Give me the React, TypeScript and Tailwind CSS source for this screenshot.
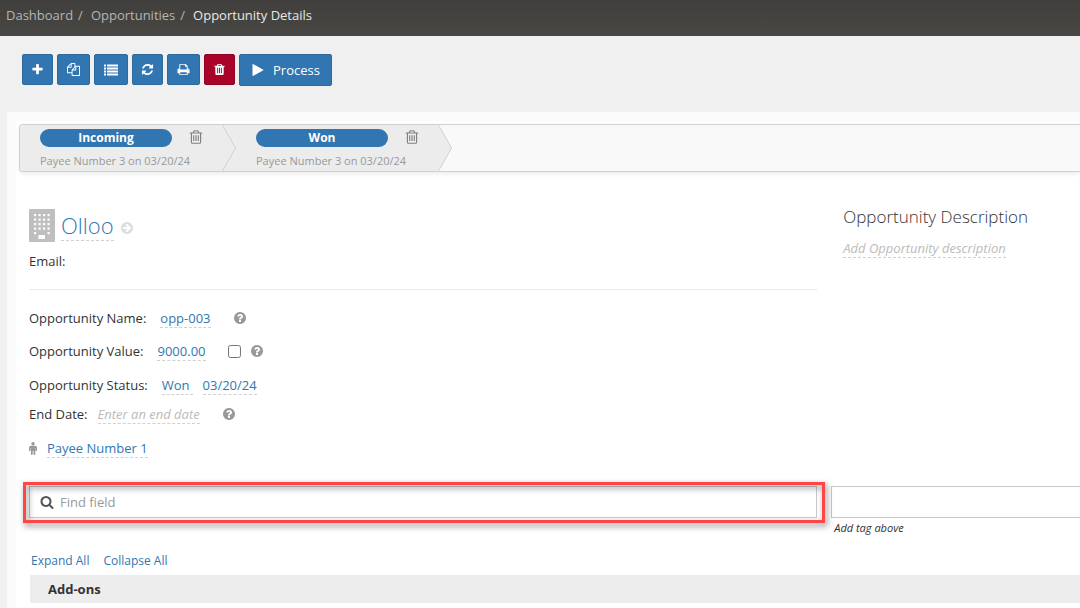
import type { ReactNode } from "react";

const circle =
  "M1664 896q0 209-103 385.5t-279.5 279.5-385.5 103-385.5-103-279.5-279.5-103-385.5 103-385.5 279.5-279.5 385.5-103 385.5 103 279.5 279.5 103 385.5z";
const canBody =
  "h448l-48-117q-7-9-17-11h-317q-10 2-17 11zm928 32v64q0 14-9 23t-23 9h-96v948q0 83-47 143.5t-113 60.5h-832q-66 0-113-58.5t-47-141.5v-952h-96q-14 0-23-9t-9-23v-64q0-14 9-23t23-9h309l70-167q15-37 54-63t79-26h320q40 0 79 26t54 63l70 167h309q14 0 23 9t9 23z";

const paths = {
  plus: "M1600 736v192q0 40-28 68t-68 28h-416v416q0 40-28 68t-68 28h-192q-40 0-68-28t-28-68v-416h-416q-40 0-68-28t-28-68v-192q0-40 28-68t68-28h416v-416q0-40 28-68t68-28h192q40 0 68 28t28 68v416h416q40 0 68 28t28 68z",
  copy: "M1696 384q40 0 68 28t28 68v1216q0 40-28 68t-68 28h-960q-40 0-68-28t-28-68v-288h-544q-40 0-68-28t-28-68v-672q0-40 20-88t48-76l408-408q28-28 76-48t88-20h416q40 0 68 28t28 68v328q68-40 128-40h416zm-544 213l-299 299h299v-299zm-640-384l-299 299h299v-299zm196 647l316-316v-416h-384v416q0 40-28 68t-68 28h-416v640h512v-256q0-40 20-88t48-76zm956 804v-1152h-384v416q0 40-28 68t-68 28h-416v640h896z",
  list: "M0 192h256v256h-256zM384 192h1408v256h-1408zM0 576h256v256h-256zM384 576h1408v256h-1408zM0 960h256v256h-256zM384 960h1408v256h-1408zM0 1344h256v256h-256zM384 1344h1408v256h-1408z",
  refresh:
    "M1639 1056q0 5-1 7-64 268-268 434.5t-478 166.5q-146 0-282.5-55t-243.5-157l-129 129q-19 19-45 19t-45-19-19-45v-448q0-26 19-45t45-19h448q26 0 45 19t19 45-19 45l-137 137q71 66 161 102t187 36q134 0 250-65t186-179q11-17 53-117 8-23 30-23h192q13 0 22.5 9.5t9.5 22.5zm25-800v448q0 26-19 45t-45 19h-448q-26 0-45-19t-19-45 19-45l138-138q-148-137-349-137-134 0-250 65t-186 179q-11 17-53 117-8 23-30 23h-199q-13 0-22.5-9.5t-9.5-22.5v-7q65-268 270-434.5t480-166.5q146 0 284 55.5t245 156.5l130-129q19-19 45-19t45 19 19 45z",
  print:
    "M448 1536h896v-256h-896v256zm0-640h896v-384h-160q-40 0-68-28t-28-68v-160h-640v640zm1152 64q0-26-19-45t-45-19-45 19-19 45 19 45 45 19 45-19 19-45zm128 0v416q0 13-9.5 22.5t-22.5 9.5h-224v160q0 40-28 68t-68 28h-960q-40 0-68-28t-28-68v-160h-224q-13 0-22.5-9.5t-9.5-22.5v-416q0-79 56.5-135.5t135.5-56.5h64v-544q0-40 28-68t68-28h672q40 0 88 20t76 48l152 152q28 28 48 76t20 88v256h64q79 0 135.5 56.5t56.5 135.5z",
  trash:
    "M704 1376v-704q0-14-9-23t-23-9h-64q-14 0-23 9t-9 23v704q0 14 9 23t23 9h64q14 0 23-9t9-23zm256 0v-704q0-14-9-23t-23-9h-64q-14 0-23 9t-9 23v704q0 14 9 23t23 9h64q14 0 23-9t9-23zm256 0v-704q0-14-9-23t-23-9h-64q-14 0-23 9t-9 23v704q0 14 9 23t23 9h64q14 0 23-9t9-23zm-544-992" +
    canBody,
  trashOutline:
    "M704 736v576q0 14-9 23t-23 9h-64q-14 0-23-9t-9-23v-576q0-14 9-23t23-9h64q14 0 23 9t9 23zm256 0v576q0 14-9 23t-23 9h-64q-14 0-23-9t-9-23v-576q0-14 9-23t23-9h64q14 0 23 9t9 23zm256 0v576q0 14-9 23t-23 9h-64q-14 0-23-9t-9-23v-576q0-14 9-23t23-9h64q14 0 23 9t9 23zm128 724v-948h-896v948q0 22 7 40.5t14.5 27 10.5 8.5h832q3 0 10.5-8.5t14.5-27 7-40.5zm-672-1076" +
    canBody,
  play: "M1576 927l-1328 738q-23 13-39.5 3t-16.5-36v-1472q0-26 16.5-36t39.5 3l1328 738q23 13 23 31t-23 31z",
  search:
    "M1216 832q0-185-131.5-316.5t-316.5-131.5-316.5 131.5-131.5 316.5 131.5 316.5 316.5 131.5 316.5-131.5 131.5-316.5zm512 832q0 52-38 90t-90 38q-54 0-90-38l-343-342q-179 124-399 124-143 0-273.5-55.5t-225-150-150-225-55.5-273.5 55.5-273.5 150-225 225-150 273.5-55.5 273.5 55.5 225 150 150 225 55.5 273.5q0 220-124 399l343 343q37 37 37 90z",
  question:
    "M1024 1376v-192q0-14-9-23t-23-9h-192q-14 0-23 9t-9 23v192q0 14 9 23t23 9h192q14 0 23-9t9-23zm256-672q0-88-55.5-163t-138.5-116-170-41q-243 0-371 213-15 24 8 42l132 100q7 6 19 6 16 0 25-12 53-68 86-92 34-24 86-24 48 0 85.5 26t37.5 59q0 38-20 61t-68 45q-63 28-115.5 86.5t-52.5 125.5v36q0 14 9 23t23 9h192q14 0 23-9t9-23q0-19 21.5-49.5t54.5-49.5q32-18 49-28.5t46-35 44.5-48 28-60.5 12.5-81z" +
    circle,
  arrowRight:
    "M1413 896q0-27-18-45l-453-453q-18-18-45-18t-45 18l-91 91q-18 18-18 45t18 45l189 189h-502q-26 0-45 19t-19 45v128q0 26 19 45t45 19h502l-189 189q-19 19-19 45t19 45l91 91q18 18 45 18t45-18l453-453q18-18 18-45z" +
    circle,
};

function Icon({ name, className }: { name: keyof typeof paths; className: string }) {
  return (
    <svg viewBox="0 0 1792 1792" fill="currentColor" fillRule="evenodd" aria-hidden="true" className={`shrink-0 ${className}`}>
      <path d={paths[name]} />
    </svg>
  );
}

const tools: { label: string; icon: keyof typeof paths; style: string; size: string }[] = [
  { label: "Add", icon: "plus", style: "w-[31px] bg-[#3276b1] border-[#2c699d]", size: "size-[13px]" },
  { label: "Copy", icon: "copy", style: "w-[33px] bg-[#3276b1] border-[#2c699d]", size: "size-[13px]" },
  { label: "List", icon: "list", style: "w-[34px] bg-[#3276b1] border-[#2c699d]", size: "size-[14px]" },
  { label: "Refresh", icon: "refresh", style: "w-[31px] bg-[#3276b1] border-[#2c699d]", size: "size-[13px]" },
  { label: "Print", icon: "print", style: "w-[33px] bg-[#3276b1] border-[#2c699d]", size: "size-[13px]" },
  { label: "Delete", icon: "trash", style: "w-[31px] bg-[#a90329] border-[#900323]", size: "size-[13px]" },
];

function Stage({ name, last }: { name: string; last?: boolean }) {
  return (
    <li className="flex w-[216px] bg-[#ececec]">
      <div className="flex flex-1 flex-col pl-5 pt-1">
        <div className="flex h-[18px] items-center gap-4">
          <span className="w-[132px] shrink-0 rounded-full bg-[#3276b1] text-center text-xs leading-[18px] font-bold text-white">{name}</span>
          <button type="button" aria-label={`Delete ${name}`} className="pb-0.5 text-[#808080]">
            <Icon name="trashOutline" className="size-4" />
          </button>
        </div>
        <p className="mt-1 text-[11px] leading-5 whitespace-nowrap text-[#999]">Payee Number 3 on 03/20/24</p>
      </div>
      <svg viewBox="0 0 14 46" className="h-[46px] w-[14px] shrink-0" aria-hidden="true">
        {last && <path d="M0 0H14V46H0L13.500 23Z" fill="#f9f9f9" />}
        <path d="M0.500 0L13.500 23L0.500 46" fill="none" stroke="#d0d0d0" />
      </svg>
    </li>
  );
}

function Editable({ children, className = "text-[#3276b1]" }: { children: ReactNode; className?: string }) {
  return (
    <a href="#edit" className={`border-b border-dashed border-[#d0d0d0] leading-[18px] ${className}`}>
      {children}
    </a>
  );
}

function Help({ className }: { className: string }) {
  return (
    <button type="button" aria-label="Help" className={`text-[#999] ${className}`}>
      <Icon name="question" className="size-[14px]" />
    </button>
  );
}

function BuildingIcon() {
  return (
    <svg viewBox="0 0 26 33" className="h-[33px] w-[26px]" aria-hidden="true">
      <rect width="26" height="33" rx="1" fill="#bfbfbf" />
      {[5, 9.500, 14, 18.500, 23].map((y, row) =>
        [5, 9.500, 14, 18.500].map((x, col) =>
          row === 4 && (col === 1 || col === 2) ? null : <rect key={`${x}-${y}`} x={x} y={y} width="2.200" height="2.200" fill="#fff" />,
        ),
      )}
      <rect x="9.500" y="26" width="6.500" height="4" fill="#fff" />
    </svg>
  );
}

function PersonIcon() {
  return (
    <svg viewBox="0 0 8 13" fill="#999" className="h-[13px] w-2" aria-hidden="true">
      <circle cx="4" cy="1.7" r="1.7" />
      <path d="M2 3.8h4q2 0 2 2v2.600q0 .7-.7.7t-.7-.7V6h-.3v6q0 .9-.9.9t-.9-.9V9h-.8v3q0 .9-.9.9t-.9-.9V6h-.4v2.400q0 .7-.7.7T0 8.400V5.800q0-2 2-2z" />
    </svg>
  );
}

export default function App() {
  return (
    <div className="min-h-screen overflow-x-hidden bg-[#f0f0f0] font-['Open_Sans',sans-serif] text-[13px] leading-5 text-[#333]">
      <nav aria-label="Breadcrumb" className="h-9 bg-linear-to-b from-[#403f3d] to-[#484743] px-1.5 pt-[5px] text-[#b5b5b5]">
        <ol className="flex">
          <li><a href="#dashboard">Dashboard</a></li>
          <li className="px-1 pl-[5px]" aria-hidden="true">/</li>
          <li className="pl-1"><a href="#opportunities">Opportunities</a></li>
          <li className="px-1 pl-[5px]" aria-hidden="true">/</li>
          <li className="pl-1 text-[#e8e8e8]" aria-current="page">Opportunity Details</li>
        </ol>
      </nav>

      <div className="flex h-[76px] items-start gap-1 px-[22px] pt-[18px] text-white">
        {tools.map((tool) => (
          <button key={tool.label} type="button" aria-label={tool.label} className={`flex h-[31px] items-center justify-center rounded-xs border ${tool.style}`}>
            <Icon name={tool.icon} className={tool.size} />
          </button>
        ))}
        <button type="button" className="flex h-8 items-center gap-2 rounded-xs border border-[#2c699d] bg-[#3276b1] px-[11px]">
          <Icon name="play" className="size-[14px]" />
          Process
        </button>
      </div>

      <div className="ml-[7px] bg-[#fafafa] pt-[9px] pl-[9px]">
        <main className="min-h-[487px] bg-white pt-[3px]">
          <ol className="ml-[3px] flex h-12 overflow-hidden rounded-l-sm border border-r-0 border-[#d0d0d0] bg-[#f9f9f9] shadow-[0_2px_4px_rgba(0,0,0,0.08)]">
            <Stage name="Incoming" />
            <Stage name="Won" last />
          </ol>

          <div className="flex pl-[13px]">
            <section className="w-3/4 shrink-0">
              <div className="border-b border-[#eaeaea] pt-9 pb-[18px]">
                <div className="flex h-[34px] items-center">
                  <BuildingIcon />
                  <h1 className="ml-1.5 flex text-[22px] font-light">
                    <a href="#account" className="border-b border-dashed border-[#d0d0d0] leading-[30px] text-[#3276b1]">Olloo</a>
                  </h1>
                  <a href="#open" aria-label="Open account" className="mt-1.5 ml-1.5 text-[#ddd]">
                    <Icon name="arrowRight" className="size-[14px]" />
                  </a>
                </div>
                <p className="mt-[9px]">Email:</p>
              </div>

              <div className="mt-[18px] flex h-5 items-center">
                <span className="mr-[14px]">Opportunity Name:</span>
                <Editable>opp-003</Editable>
                <Help className="ml-[22px]" />
              </div>
              <div className="mt-[13px] flex h-5 items-center">
                <label htmlFor="value-flag" className="mr-[14px]">Opportunity Value:</label>
                <Editable>9000.00</Editable>
                <input id="value-flag" type="checkbox" className="ml-[22px] size-[13px]" />
                <Help className="ml-[9px]" />
              </div>
              <div className="mt-[14px] flex h-5 items-center">
                <span className="mr-[14px]">Opportunity Status:</span>
                <Editable className="pr-[3px] text-[#3276b1]">Won</Editable>
                <span className="w-[10px]" />
                <Editable>03/20/24</Editable>
              </div>
              <div className="mt-[9px] flex h-5 items-center">
                <span className="mr-[10px]">End Date:</span>
                <Editable className="text-[#bbb] italic">Enter an end date</Editable>
                <Help className="ml-[22px]" />
              </div>
              <div className="mt-[14px] flex h-5 items-center">
                <PersonIcon />
                <span className="w-[10px]" />
                <Editable>Payee Number 1</Editable>
              </div>
            </section>

            <section className="flex-1 pt-[33px] pl-[26px]">
              <h2 className="text-[17px] leading-6 font-light whitespace-nowrap">Opportunity Description</h2>
              <p className="mt-[10px] flex whitespace-nowrap">
                <Editable className="text-[#bbb] italic">Add Opportunity description</Editable>
              </p>
            </section>
          </div>

          <div className="mt-7 flex items-start pl-[13px]">
            <div className="relative w-3/4 shrink-0">
              <div className="flex h-8 items-center gap-1.5 border border-[#c8c8c8] px-2.5">
                <Icon name="search" className="size-[14px] text-[#555]" />
                <input type="text" aria-label="Find field" placeholder="Find field" className="min-w-0 flex-1 outline-none placeholder:text-[#999]" />
              </div>
              <div className="pointer-events-none absolute -top-1 -right-2 -bottom-[5px] -left-1.5 border-3 border-[#ff4545] drop-shadow-[2px_3px_3px_rgba(0,0,0,0.5)]" />
            </div>
            <div className="ml-[14px] flex-1">
              <input id="tags" type="text" className="block h-8 w-full border border-r-0 border-[#c8c8c8] px-2.5" />
              <label htmlFor="tags" className="block pl-[3px] text-[11px] leading-5 italic">Add tag above</label>
            </div>
          </div>

          <div className="mt-[13px] flex gap-[14px] pl-[15px] text-xs leading-5 text-[#3276b1]">
            <button type="button">Expand All</button>
            <button type="button">Collapse All</button>
          </div>
          <h3 className="mt-1 ml-[14px] bg-[#ededed] pl-[18px] leading-7 font-bold">Add-ons</h3>
        </main>
      </div>
    </div>
  );
}
